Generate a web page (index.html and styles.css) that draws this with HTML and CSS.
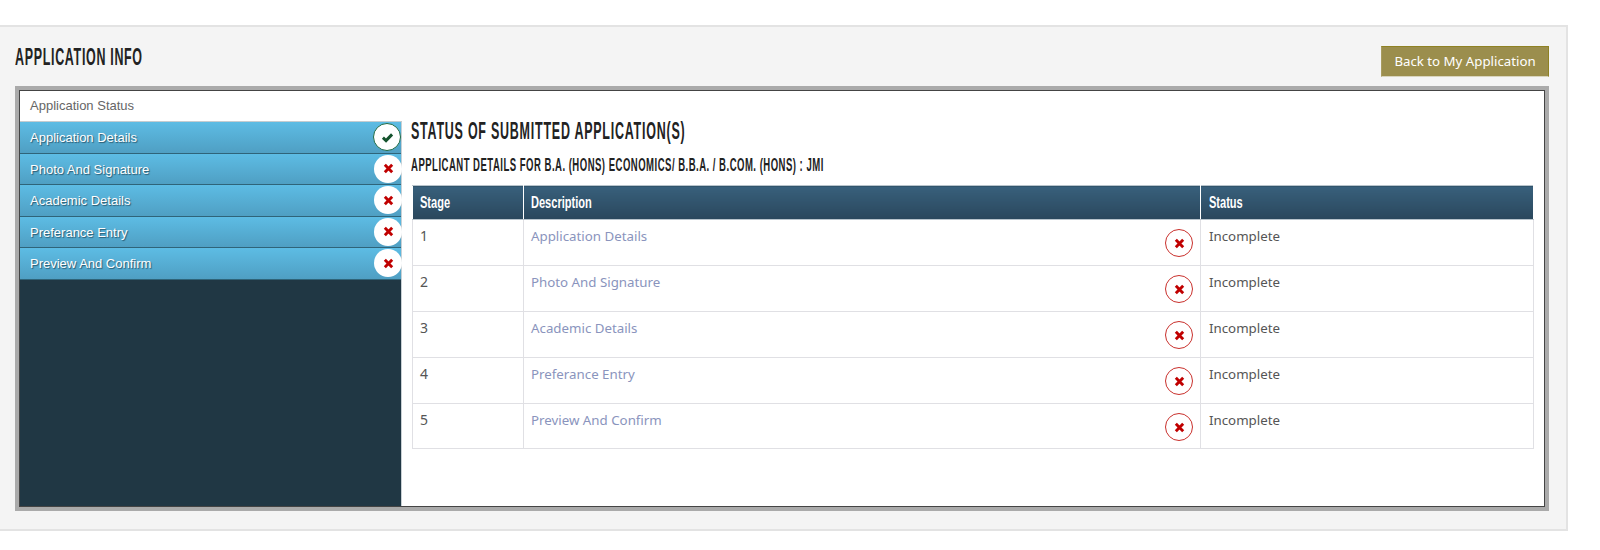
FILE: index.html
```html
<!DOCTYPE html>
<html lang="en">
<head>
<meta charset="utf-8">
<title>Application Info</title>
<link rel="stylesheet" href="styles.css">
</head>
<body>
<svg class="sprites" width="0" height="0" aria-hidden="true">
  <symbol id="x" viewBox="0 0 12 12"><path d="M2 2 10 10M10 2 2 10" fill="none" stroke="currentColor" stroke-width="3.2"/></symbol>
  <symbol id="check" viewBox="0 0 14 12"><path d="M2 6.2 5.4 9.4 12 2.6" fill="none" stroke="currentColor" stroke-width="3.2"/></symbol>
</svg>
<main class="panel">
  <header class="panel-head">
    <h1 class="title">APPLICATION INFO</h1>
    <a class="back-btn" href="#">Back to My Application</a>
  </header>
  <section class="frame">
    <aside class="sidebar">
      <div class="side-head">Application Status</div>
      <ul class="side-list">
        <li class="side-item">Application Details<span class="badge done"><svg class="ico-check"><use href="#check"/></svg></span></li>
        <li class="side-item">Photo And Signature<span class="badge"><svg class="ico-x"><use href="#x"/></svg></span></li>
        <li class="side-item">Academic Details<span class="badge"><svg class="ico-x"><use href="#x"/></svg></span></li>
        <li class="side-item">Preferance Entry<span class="badge"><svg class="ico-x"><use href="#x"/></svg></span></li>
        <li class="side-item">Preview And Confirm<span class="badge"><svg class="ico-x"><use href="#x"/></svg></span></li>
      </ul>
    </aside>
    <div class="content">
      <h2 class="subtitle">STATUS OF SUBMITTED APPLICATION(S)</h2>
      <h3 class="detail">APPLICANT DETAILS FOR B.A. (HONS) ECONOMICS/ B.B.A. / B.COM. (HONS) : JMI</h3>
      <table class="stages">
        <thead>
          <tr><th class="col-stage"><span class="th-label">Stage</span></th><th class="col-desc"><span class="th-label">Description</span></th><th class="col-status"><span class="th-label">Status</span></th></tr>
        </thead>
        <tbody>
          <tr><td class="num">1</td><td class="desc"><a href="#">Application Details</a><span class="mark"><svg class="ico-x"><use href="#x"/></svg></span></td><td class="state">Incomplete</td></tr>
          <tr><td class="num">2</td><td class="desc"><a href="#">Photo And Signature</a><span class="mark"><svg class="ico-x"><use href="#x"/></svg></span></td><td class="state">Incomplete</td></tr>
          <tr><td class="num">3</td><td class="desc"><a href="#">Academic Details</a><span class="mark"><svg class="ico-x"><use href="#x"/></svg></span></td><td class="state">Incomplete</td></tr>
          <tr><td class="num">4</td><td class="desc"><a href="#">Preferance Entry</a><span class="mark"><svg class="ico-x"><use href="#x"/></svg></span></td><td class="state">Incomplete</td></tr>
          <tr class="last"><td class="num">5</td><td class="desc"><a href="#">Preview And Confirm</a><span class="mark"><svg class="ico-x"><use href="#x"/></svg></span></td><td class="state">Incomplete</td></tr>
        </tbody>
      </table>
    </div>
  </section>
</main>
</body>
</html>
```
FILE: styles.css
```css
* { box-sizing: border-box; }
html, body { margin: 0; background: #fff; }
body { padding-top: 25px; height: 550px; overflow: hidden; font-family: "Noto Sans", sans-serif; color: #555; }
.sprites { position: absolute; }

.panel {
  width: 1568px; height: 506px; padding: 19px 17px 0 15px;
  background: #f4f4f4; border: solid #e3e3e3; border-width: 2px 2px 2px 0;
}
.panel-head { display: flex; justify-content: space-between; align-items: flex-start; height: 40px; }
.title, .subtitle, .detail {
  margin: 0; font-family: "Liberation Sans", sans-serif; font-weight: 700; color: #222;
  white-space: nowrap; width: fit-content; transform-origin: left center;
}
.title { font-size: 24px; line-height: 22px; letter-spacing: 1.3px; transform: scaleX(.52); }
.back-btn {
  display: block; width: 168px; height: 31px; text-align: center;
  background: #9b8e4d; border: 1px solid #8f8223; border-left-color: #a89c60; border-bottom-color: #d8d4bd;
  color: #fff; font-size: 13.25px; line-height: 28px; text-decoration: none;
}

.frame {
  display: flex; width: 1534px; height: 425px;
  background: #fff; border: 4px solid #aaa; outline: 1px solid #444; outline-offset: -5px;
}
.sidebar { width: 382px; margin: 1px 0 1px 1px; background: #203744; border-right: 1px solid #c8d0d4; flex: none; }
.side-head { height: 31px; margin-right: -1px; padding-left: 10px; background: #fff; color: #666; font: 13px/29px "Liberation Sans", sans-serif; border-bottom: 1px solid #c4ccd0; }
.side-list { list-style: none; margin: 0; padding: 0; }
.side-item {
  position: relative; height: 31.6px; padding-left: 10px;
  background: linear-gradient(#5dbce4, #4f9fc3); border-bottom: 1px solid #2f6479;
  color: #fff; font: 13px/31px "Liberation Sans", sans-serif; text-shadow: 1px 1px 1px #2a5a70;
}
.badge {
  position: absolute; right: -1px; top: 1px; z-index: 1; width: 28px; height: 28px;
  display: flex; align-items: center; justify-content: center;
  background: #fff; border-radius: 50%; color: #c00000;
}
.badge.done { right: 0; border: 1px solid #1f6b45; color: #14532d; }
.ico-x { width: 11px; height: 11px; display: block; }
.ico-check { width: 13px; height: 11px; display: block; }

.content { flex: 1; padding: 27px 0 0 10px; min-width: 0; }
.subtitle { margin-left: -1px; font-size: 24px; line-height: 28px; letter-spacing: 1.47px; transform: scaleX(.52); }
.detail { margin: 10px 0 0 -1px; font-size: 18px; line-height: 20px; letter-spacing: .92px; transform: scaleX(.53); }

.stages { width: 1122px; margin-top: 10px; border-collapse: collapse; table-layout: fixed; font-size: 13.3px; }
.stages th {
  height: 34px; padding: 0 7px; text-align: left; color: #fff; font-size: 16px; font-weight: 700;
  font-family: "Liberation Sans", sans-serif;
  background: linear-gradient(#38607c, #2a475c);
  border: 1px solid #b8c4cc; border-right-color: #fff; border-left-color: #fff;
}
.th-label { display: inline-block; transform: scaleX(.69); transform-origin: left center; }
.col-stage { width: 111px; }
.col-desc { width: 677px; }
.stages th.col-status, .stages td.state { padding-left: 8px; }
.stages td {
  position: relative; height: 46px; padding: 6px 7px 0; vertical-align: top; line-height: 20px;
  border: 1px solid #e0e0e4; color: #555;
}
.stages .last td { height: 45px; }
.stages td.num { font-size: 14px; }
.stages a { color: #8a94bd; text-decoration: none; }
.mark {
  position: absolute; right: 7px; top: 9px; width: 28px; height: 28px;
  display: flex; align-items: center; justify-content: center;
  border: 1px solid #c9302c; border-radius: 50%; color: #c00000;
}
```
